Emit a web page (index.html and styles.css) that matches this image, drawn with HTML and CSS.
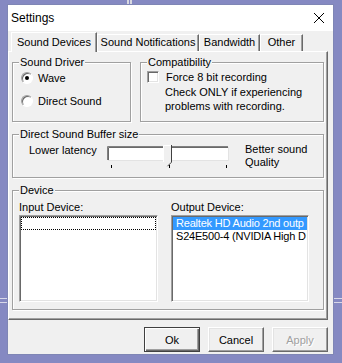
FILE: index.html
```html
<!DOCTYPE html>
<html lang="en">
<head>
  <meta charset="UTF-8" />
  <title>Settings</title>
  <link rel="stylesheet" href="styles.css">
</head>
<body>
  <div class="desk-mark mark-top"></div>
  <div class="desk-mark mark-left"></div>
  <div class="desk-mark mark-right"></div>

  <div class="window">
    <div class="titlebar">
      <span class="title">Settings</span>
      <svg class="close" width="10" height="10" viewBox="0 0 10 10">
        <path d="M0 0L10 10M10 0L0 10" stroke="#000" stroke-width="1" fill="none"/>
      </svg>
    </div>

    <div class="client">
      <div class="tabs">
        <div class="tab active" style="width:86px">Sound Devices</div>
        <div class="tab" style="width:102px">Sound Notifications</div>
        <div class="tab" style="width:61px">Bandwidth</div>
        <div class="tab" style="width:43px">Other</div>
      </div>

      <div class="panel">
        <div class="row">
          <div class="group driver">
            <span class="legend">Sound Driver</span>
            <label class="option"><span class="radio checked"></span>Wave</label>
            <label class="option"><span class="radio"></span>Direct Sound</label>
          </div>
          <div class="group compat">
            <span class="legend">Compatibility</span>
            <label class="option"><span class="checkbox"></span>Force 8 bit recording</label>
            <p class="note">Check ONLY if experiencing<br>problems with recording.</p>
          </div>
        </div>

        <div class="group buffer">
          <span class="legend">Direct Sound Buffer size</span>
          <span class="slider-label">Lower latency</span>
          <svg class="slider" width="122" height="24" viewBox="0 0 122 24">
            <rect x="1" y="2" width="120" height="13" fill="#fff"/>
            <path d="M0.5 15V1.5H121" fill="none" stroke="#808080"/>
            <path d="M1.5 15V2.5H121" fill="none" stroke="#696969"/>
            <path d="M1 15.5H121.5V2" fill="none" stroke="#e3e3e3"/>
            <path d="M56 0H64V17L60 21L56 17Z" fill="#f0f0f0"/>
            <path d="M56.5 17V0.5H64" fill="none" stroke="#fff"/>
            <path d="M64.5 0V17.2L60.5 21.2" fill="none" stroke="#404040"/>
            <path d="M4.5 20v3M62.5 20v3M119.5 20v3" stroke="#000"/>
          </svg>
          <span class="slider-end">Better sound<br>Quality</span>
        </div>

        <div class="group device">
          <span class="legend">Device</span>
          <div class="device-col input-col">
            <div class="col-label">Input Device:</div>
            <div class="listbox">
              <div class="item focus"></div>
            </div>
          </div>
          <div class="device-col output-col">
            <div class="col-label">Output Device:</div>
            <div class="listbox">
              <div class="item selected">Realtek HD Audio 2nd outp</div>
              <div class="item">S24E500-4 (NVIDIA High D</div>
            </div>
          </div>
        </div>
      </div>

      <div class="buttons">
        <button class="btn default">Ok</button>
        <button class="btn">Cancel</button>
        <button class="btn disabled">Apply</button>
      </div>
    </div>
  </div>
</body>
</html>
```

FILE: styles.css
```css
* {
  box-sizing: border-box;
}

body {
  margin: 0;
  width: 342px;
  height: 363px;
  overflow: hidden;
  position: relative;
  background: #8589c2;
  font-family: "Liberation Sans", Arial, sans-serif;
  font-size: 11px;
  color: #000;
}

/* bits of other windows on the desktop */
.desk-mark {
  position: absolute;
}

.mark-top {
  left: 127px;
  top: 0;
  width: 5px;
  height: 4px;
  border-left: 2px solid #d8d8e0;
  border-right: 2px solid #d8d8e0;
}

.mark-left {
  left: 0;
  top: 298px;
  width: 7px;
  height: 5px;
  border-top: 1px solid #d8d8e8;
  border-bottom: 1px solid #d8d8e8;
}

.mark-right {
  left: 334px;
  top: 298px;
  width: 8px;
  height: 5px;
  border-top: 1px solid #d8d8e8;
  border-bottom: 1px solid #d8d8e8;
}

.window {
  margin: 4px 0 0 7px;
  width: 327px;
  height: 351px;
  border: 1px solid #7f86b5;
  background: #f0f0f0;
  display: flex;
  flex-direction: column;
}

.titlebar {
  height: 26px;
  flex-shrink: 0;
  background: #fff;
  display: flex;
  align-items: center;
  justify-content: space-between;
  padding: 0 9px 0 3px;
  font-size: 12px;
}

.close {
  display: block;
}

.client {
  flex: 1;
  padding-top: 1px;
}

.tabs {
  display: flex;
  align-items: flex-end;
  height: 19px;
  padding-left: 3px;
}

.tab {
  height: 17px;
  padding-top: 1px;
  border-top: 1px solid #fff;
  border-left: 1px solid #fff;
  border-right: 1px solid #696969;
  box-shadow: inset -1px 0 #a0a0a0;
  text-align: center;
  line-height: 13px;
  white-space: nowrap;
}

.tab.active {
  height: 20px;
  padding-top: 3px;
  margin-bottom: -1px;
  position: relative;
  z-index: 1;
  background: #f0f0f0;
}

.panel {
  width: 320px;
  height: 269px;
  padding: 10px 3px 0;
  border: 1px solid;
  border-color: #fff #696969 #696969 #fff;
  box-shadow: inset -1px -1px #a0a0a0;
}

.row {
  display: flex;
  gap: 9px;
  height: 60px;
}

.group {
  position: relative;
  border: 1px solid #a0a0a0;
  box-shadow: inset 1px 1px #fff, 1px 1px #fff;
}

.legend {
  position: absolute;
  top: -7px;
  left: 6px;
  padding: 0 1px;
  background: #f0f0f0;
  line-height: 13px;
  white-space: nowrap;
}

.driver {
  width: 119px;
  padding: 7px 0 0 8px;
  display: flex;
  flex-direction: column;
  gap: 7px;
}

.compat {
  flex: 1;
  padding: 6px 0 0 6px;
}

.option {
  display: flex;
  align-items: center;
  height: 16px;
}

.radio {
  width: 12px;
  height: 12px;
  margin-right: 5px;
  border-radius: 50%;
  border: 1px solid;
  border-color: #a0a0a0 #fff #fff #a0a0a0;
  box-shadow: inset 1px 1px #696969;
  background: #fff;
  position: relative;
}

.radio.checked::after {
  content: "";
  position: absolute;
  left: 3px;
  top: 3px;
  width: 4px;
  height: 4px;
  border-radius: 50%;
  background: #000;
}

.checkbox {
  width: 12px;
  height: 12px;
  margin-right: 7px;
  border: 1px solid;
  border-color: #a0a0a0 #fff #fff #a0a0a0;
  box-shadow: inset 1px 1px #696969, inset -1px -1px #e3e3e3;
  background: #fff;
}

.note {
  margin: 0;
  padding-left: 18px;
  line-height: 14px;
}

.buffer {
  margin-top: 12px;
  height: 44px;
  display: flex;
  align-items: flex-start;
  padding: 8px 0 0 16px;
}

.slider-label {
  width: 78px;
  line-height: 14px;
}

.slider {
  display: block;
  margin-top: 2px;
}

.slider-end {
  margin-left: 16px;
  line-height: 13px;
}

.device {
  margin-top: 12px;
  height: 120px;
  display: flex;
  gap: 13px;
  padding: 9px 0 0 6px;
}

.input-col {
  width: 139px;
}

.output-col {
  width: 138px;
}

.col-label {
  line-height: 14px;
  margin-bottom: 1px;
}

.listbox {
  height: 87px;
  padding: 1px;
  background: #fff;
  border: 1px solid;
  border-color: #a0a0a0 #fff #fff #a0a0a0;
  box-shadow: inset 1px 1px #696969, inset -1px -1px #e3e3e3;
  overflow: hidden;
}

.item {
  height: 13px;
  line-height: 13px;
  padding-left: 3px;
  white-space: nowrap;
  letter-spacing: -0.2px;
}

.item.selected {
  background: #3399ff;
  color: #fff;
}

.item.focus {
  border: 1px dotted #000;
}

.buttons {
  width: 320px;
  margin-top: 7px;
  display: flex;
  justify-content: flex-end;
  gap: 8px;
}

.btn {
  width: 56px;
  height: 25px;
  padding: 0;
  font: inherit;
  color: #000;
  background: #f0f0f0;
  border: 1px solid;
  border-color: #fff #696969 #696969 #fff;
  box-shadow: inset -1px -1px #a0a0a0, inset 1px 1px #e3e3e3;
  text-align: center;
}

.btn.default {
  border-color: #404040;
  box-shadow: inset 1px 1px #fff, inset -1px -1px #696969, inset -2px -2px #a0a0a0;
}

.btn.disabled {
  color: #a0a0a0;
  text-shadow: 1px 1px #fff;
}
```
